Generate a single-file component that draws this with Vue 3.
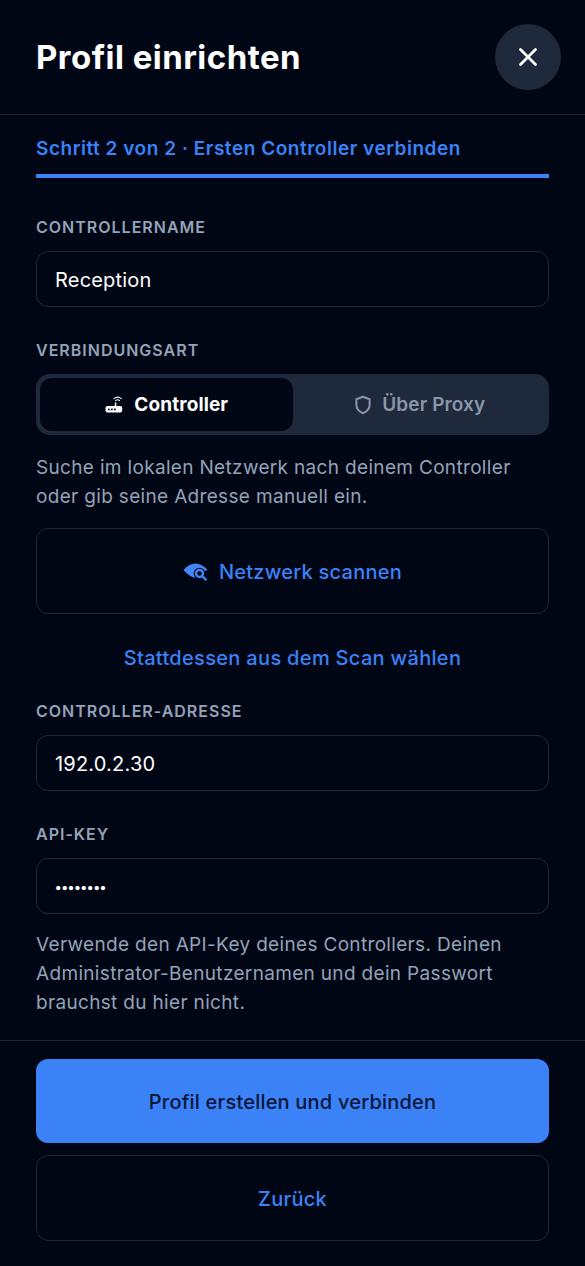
<script setup>
const title = 'Profil einrichten'
</script>

<template>
  <div class="page">
    <header class="head">
      <h1>{{ title }}</h1>
      <button class="close" aria-label="Schließen">
        <svg width="24" height="24" viewBox="0 0 24 24" fill="none" stroke="#fff" stroke-width="2.8" stroke-linecap="round"><path d="M4.500 4.500l15 15M19.500 4.500l-15 15"/></svg>
      </button>
    </header>

    <main class="body">
      <div class="step">Schritt 2 von 2 · Ersten Controller verbinden</div>
      <div class="bar"></div>

      <div class="label first">CONTROLLERNAME</div>
      <div class="field">Reception</div>

      <div class="label second">VERBINDUNGSART</div>
      <div class="seg">
        <div class="opt active">
          <svg width="20" height="20" viewBox="0 0 20 20" fill="#fff">
            <path d="M3.500 11h7.300V7.400h1.500V11h3.900a2 2 0 0 1 2 2v2.600a2 2 0 0 1-2 2H3.500a2 2 0 0 1-2-2V13a2 2 0 0 1 2-2z"/>
            <rect x="4" y="13.600" width="1.700" height="1.700" fill="#010615"/>
            <rect x="7" y="13.600" width="1.700" height="1.700" fill="#010615"/>
            <rect x="10" y="13.600" width="1.700" height="1.700" fill="#010615"/>
            <path d="M11.500 5.600a3.200 3.200 0 0 1 4.100 0M9.900 3.700a5.600 5.600 0 0 1 7.300 0" fill="none" stroke="#fff" stroke-width="1.100" stroke-linecap="round"/>
          </svg>
          <span>Controller</span>
        </div>
        <div class="opt">
          <svg width="20" height="22" viewBox="-1 0 20 22" fill="none" stroke="#8a96a8" stroke-width="2" stroke-linejoin="round"><path d="M10 2.800l6.600 2.500v5.400c0 4-2.700 6.900-6.600 8.500-3.900-1.600-6.600-4.500-6.600-8.500V5.300z"/></svg>
          <span>Über Proxy</span>
        </div>
      </div>

      <p class="help one">Suche im lokalen Netzwerk nach deinem Controller<br>oder gib seine Adresse manuell ein.</p>

      <button class="ghost scan">
        <svg width="25" height="20" viewBox="0 0 25 20">
          <path fill="#4285f4" d="M.5 8C4 3.800 8 1.500 12.500 1.500 17 1.500 21 3.800 24.500 8L16 12l-3.500 4C8 15 4 12.500.5 8z"/>
          <circle cx="16.500" cy="11.500" r="5.800" fill="#010615"/>
          <circle cx="16.500" cy="11.500" r="3.500" fill="none" stroke="#4285f4" stroke-width="2.400"/>
          <path d="M19.200 14.200l3.600 3.400" stroke="#4285f4" stroke-width="2.400" stroke-linecap="round"/>
        </svg>
        <span>Netzwerk scannen</span>
      </button>

      <a class="link">Stattdessen aus dem Scan wählen</a>

      <div class="label third">CONTROLLER-ADRESSE</div>
      <div class="field">192.0.2.30</div>

      <div class="label second">API-KEY</div>
      <div class="field dots">••••••••</div>

      <p class="help two">Verwende den API-Key deines Controllers. Deinen<br>Administrator-Benutzernamen und dein Passwort<br>brauchst du hier nicht.</p>
    </main>

    <footer class="foot">
      <button class="primary">Profil erstellen und verbinden</button>
      <button class="ghost back">Zurück</button>
    </footer>
  </div>
</template>

<style>
html, body { margin: 0; background: #010615; }
</style>

<style scoped>
.page {
  width: 585px;
  height: 1266px;
  box-sizing: border-box;
  background: #010615;
  color: #fff;
  font-family: Inter, "Noto Sans", sans-serif;
  display: flex;
  flex-direction: column;
  overflow: hidden;
}
.head {
  height: 115px;
  box-sizing: border-box;
  padding: 0 24px 1px 36px;
  display: flex;
  align-items: center;
  justify-content: space-between;
  border-bottom: 1px solid #1e2633;
}
h1 {
  margin: 0;
  font-size: 33px;
  line-height: 40px;
  font-weight: 700;
  letter-spacing: 0.47px;
}
.close {
  width: 66px;
  height: 66px;
  border: 0;
  border-radius: 50%;
  background: #1e293b;
  display: flex;
  align-items: center;
  justify-content: center;
  padding: 0;
}
.body {
  flex: 1;
  padding: 0 36px;
  display: flex;
  flex-direction: column;
}
.step {
  margin-top: 21px;
  height: 24px;
  line-height: 26px;
  font-size: 19px;
  font-weight: 600;
  letter-spacing: 0.53px;
  color: #3b82f6;
}
.bar {
  margin-top: 14px;
  height: 4px;
  background: #3b82f6;
}
.label {
  height: 20px;
  line-height: 20px;
  font-size: 16px;
  font-weight: 600;
  letter-spacing: 1px;
  color: #94a3b8;
}
.first { margin-top: 39px; }
.second { margin-top: 33px; }
.third { margin-top: 0; }
.field {
  margin-top: 14px;
  height: 56px;
  box-sizing: border-box;
  border: 1px solid #1e293b;
  border-radius: 12px;
  padding: 2px 18px 0 18px;
  display: flex;
  align-items: center;
  font-size: 20px;
  letter-spacing: 0.2px;
  color: #fff;
}
.dots { font-size: 13.5px; font-weight: 700; letter-spacing: 0; }
.seg {
  margin-top: 14px;
  height: 61px;
  box-sizing: border-box;
  padding: 4px;
  border-radius: 14px;
  background: #1e293b;
  display: flex;
}
.opt {
  flex: 1;
  display: flex;
  align-items: center;
  justify-content: center;
  gap: 10px;
  font-size: 19px;
  font-weight: 600;
  letter-spacing: 0.1px;
  color: #8a96a8;
  border-radius: 12px;
}
.active {
  background: #010615;
  color: #fff;
  font-weight: 700;
}
.help {
  margin: 0;
  font-size: 19px;
  line-height: 29px;
  letter-spacing: 0.33px;
  color: #94a3b8;
}
.one { margin-top: 18px; }
.two { margin-top: 16px; }
.ghost {
  width: 100%;
  box-sizing: border-box;
  background: transparent;
  border: 1px solid #1e293b;
  border-radius: 12px;
  color: #3b82f6;
  font-family: inherit;
  font-size: 20px;
  font-weight: 500;
  letter-spacing: 0.25px;
  display: flex;
  align-items: center;
  justify-content: center;
  padding: 2px 0 0;
}
.scan {
  margin-top: 17px;
  height: 86px;
  gap: 11px;
}
.link {
  margin-top: 29px;
  height: 28px;
  line-height: 30px;
  text-align: center;
  font-size: 20px;
  font-weight: 500;
  letter-spacing: 0.32px;
  color: #3b82f6;
  margin-bottom: 30px;
}
.foot {
  height: 226px;
  box-sizing: border-box;
  border-top: 1px solid #1e2633;
  padding: 18px 36px 0;
  display: flex;
  flex-direction: column;
  gap: 12px;
}
.primary {
  height: 84px;
  border: 0;
  border-radius: 12px;
  background: #3b82f6;
  color: #08163a;
  font-family: inherit;
  font-size: 20px;
  font-weight: 500;
  letter-spacing: 0.2px;
  padding: 2px 0 0;
}
.back { height: 86px; }
</style>
